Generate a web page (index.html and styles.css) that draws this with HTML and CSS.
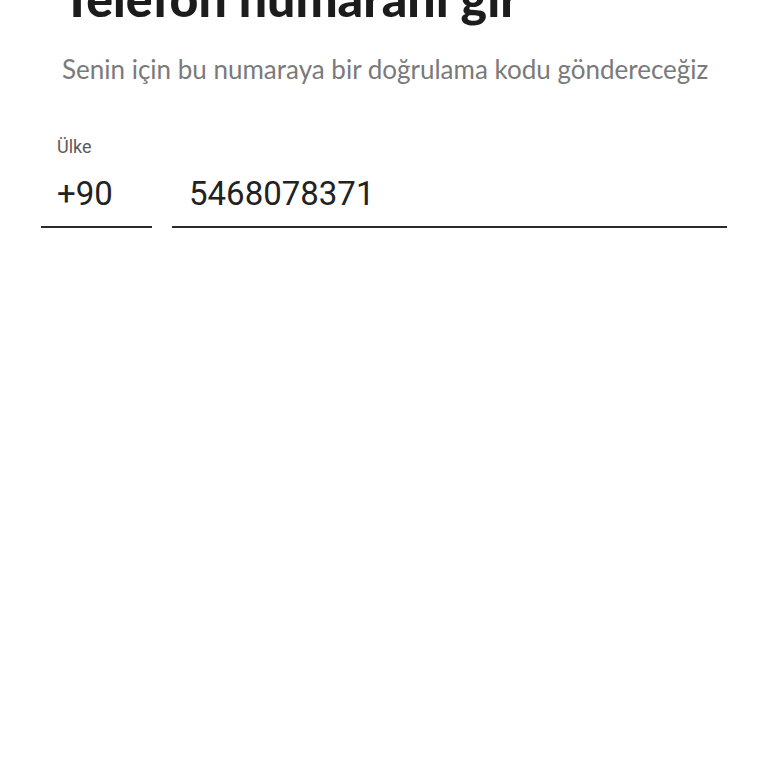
FILE: index.html
```html
<!DOCTYPE html>
<html lang="tr">
<head>
<meta charset="utf-8">
<title>Telefon numaranı gir</title>
<link rel="stylesheet" href="styles.css">
</head>
<body>
<main class="screen">
  <header class="intro">
    <h1 class="title">Telefon numaranı gir</h1>
    <p class="subtitle">Senin için bu numaraya bir doğrulama kodu göndereceğiz</p>
  </header>
  <form class="phone-form">
    <div class="field field-country">
      <label class="field-label">Ülke</label>
      <div class="field-value">+90</div>
    </div>
    <div class="field field-number">
      <div class="field-value">5468078371</div>
    </div>
  </form>
</main>
</body>
</html>
```

FILE: styles.css
```css
* { box-sizing: border-box; }

html, body {
  margin: 0;
  padding: 0;
  background: #ffffff;
}

body {
  width: 768px;
  height: 768px;
  overflow: hidden;
  font-family: "Lato", "Noto Sans", sans-serif;
  color: #1f1f1f;
}

.screen {
  display: flex;
  flex-direction: column;
}

.intro {
  padding: 0 20px 0 62px;
  margin-top: -32px;
}

.title {
  margin: 0;
  font-size: 50px;
  line-height: 60px;
  font-weight: 900;
  color: #1c1c1c;
  white-space: nowrap;
}

.subtitle {
  margin: 26px 0 0;
  font-size: 26px;
  line-height: 31px;
  color: #7a7a7a;
  white-space: nowrap;
}

.phone-form {
  display: flex;
  align-items: flex-end;
  gap: 20px;
  padding: 0 41px;
  margin-top: 51px;
}

.field {
  display: flex;
  flex-direction: column;
  border-bottom: 2px solid #2b2b2b;
  padding-left: 17px;
}

.field-country {
  width: 111px;
}

.field-number {
  flex: 1;
}

.field-label {
  font-family: "Roboto", sans-serif;
  font-size: 18px;
  line-height: 22px;
  color: #5a5a5a;
  margin-left: -1px;
}

.field-value {
  font-family: "Roboto", sans-serif;
  font-size: 33px;
  line-height: 40px;
  color: #222222;
  padding: 16px 0 12px;
}

.field-country .field-value {
  margin-left: -1px;
}
```
